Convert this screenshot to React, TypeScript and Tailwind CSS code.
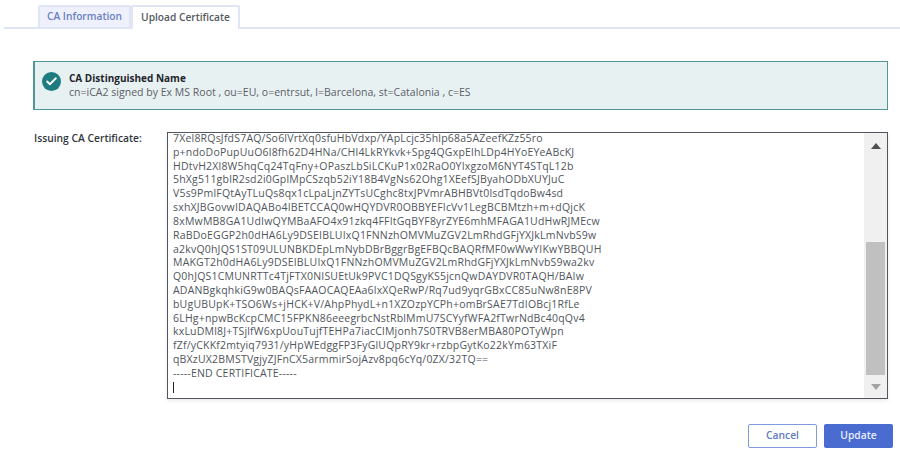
import { Check } from "lucide-react";

const certLines = [
  "7Xel8RQsJfdS7AQ/So6lVrtXq0sfuHbVdxp/YApLcjc35hlp68a5AZeefKZz55ro",
  "p+ndoDoPupUuO6l8fh62D4HNa/CHl4LkRYkvk+Spg4QGxpElhLDp4HYoEYeABcKJ",
  "HDtvH2Xl8W5hqCq24TqFny+OPaszLbSiLCKuP1x02RaO0YIxgzoM6NYT4STqL12b",
  "5hXg511gblR2sd2i0GplMpCSzqb52iY18B4VgNs62Ohg1XEefSJByahODbXUYJuC",
  "V5s9PmlFQtAyTLuQs8qx1cLpaLjnZYTsUCghc8txJPVmrABHBVt0lsdTqdoBw4sd",
  "sxhXJBGovwIDAQABo4IBETCCAQ0wHQYDVR0OBBYEFIcVv1LegBCBMtzh+m+dQjcK",
  "8xMwMB8GA1UdIwQYMBaAFO4x91zkq4FFItGqBYF8yrZYE6mhMFAGA1UdHwRJMEcw",
  "RaBDoEGGP2h0dHA6Ly9DSEIBLUIxQ1FNNzhOMVMuZGV2LmRhdGFjYXJkLmNvbS9w",
  "a2kvQ0hJQS1ST09ULUNBKDEpLmNybDBrBggrBgEFBQcBAQRfMF0wWwYIKwYBBQUH",
  "MAKGT2h0dHA6Ly9DSEIBLUIxQ1FNNzhOMVMuZGV2LmRhdGFjYXJkLmNvbS9wa2kv",
  "Q0hJQS1CMUNRTTc4TjFTX0NISUEtUk9PVC1DQSgyKS5jcnQwDAYDVR0TAQH/BAIw",
  "ADANBgkqhkiG9w0BAQsFAAOCAQEAa6lxXQeRwP/Rq7ud9yqrGBxCC85uNw8nE8PV",
  "bUgUBUpK+TSO6Ws+jHCK+V/AhpPhydL+n1XZOzpYCPh+omBrSAE7TdIOBcj1RfLe",
  "6LHg+npwBcKcpCMC15FPKN86eeegrbcNstRblMmU7SCYyfWFA2fTwrNdBc40qQv4",
  "kxLuDMl8J+TSjlfW6xpUouTujfTEHPa7iacClMjonh7S0TRVB8erMBA80POTyWpn",
  "fZf/yCKKf2mtyiq7931/yHpWEdggFP3FyGlUQpRY9kr+rzbpGytKo22kYm63TXiF",
  "qBXzUX2BMSTVgjyZJFnCX5armmirSojAzv8pq6cYq/0ZX/32TQ==",
  "-----END CERTIFICATE-----",
];

export default function App() {
  return (
    <div className="w-[900px] h-[456px] bg-white overflow-hidden font-['Open_Sans','Liberation_Sans',sans-serif] text-[#4a4f57]">
      <div className="ml-1 mt-[5px] h-6 flex pl-[34px] border-b-2 border-[#dfe5f5]">
        <div className="w-[93px] h-6 flex items-center justify-center bg-[#eef1fb] border-2 border-[#dfe5f5] rounded-t-[2px] text-[10.2px] font-semibold text-[#6b80c0]">
          CA Information
        </div>
        <div className="w-[109px] h-6 flex items-center justify-center bg-white border-2 border-b-0 border-[#dfe5f5] rounded-t-[2px] text-[10.2px] font-semibold text-[#555a60]">
          Upload Certificate
        </div>
      </div>

      <div className="ml-[33px] mt-8 w-[855px] h-[49px] flex items-start gap-2 pl-[7px] pt-[10px] bg-[#e8f1f2] border border-[#4f9799] border-l-2">
        <div className="w-[19px] h-[19px] rounded-full bg-[#1c7c80] flex items-center justify-center shrink-0">
          <Check size={13} strokeWidth={3.5} className="text-white" />
        </div>
        <div className="flex flex-col -mt-[1px]">
          <div className="text-[10px] leading-[14px] font-bold text-[#22252b]">CA Distinguished Name</div>
          <div className="text-[10.5px] leading-[14px] tracking-[0.02px] text-[#5b6067]">
            cn=iCA2 signed by Ex MS Root , ou=EU, o=entrsut, l=Barcelona, st=Catalonia , c=ES
          </div>
        </div>
      </div>

      <div className="ml-[34px] mt-[22px] flex">
        <div className="w-[133px] text-[10.3px] leading-[13px] font-semibold text-[#33373d]">
          Issuing CA Certificate:
        </div>
        <div className="w-[721px] h-[267px] flex border border-[#50555f] shadow-[0_2px_4px_rgba(0,0,0,0.08)]">
          <div className="flex-1 overflow-hidden pl-[5px] -mt-[1px] text-[10.5px] leading-[13.82px] tracking-[0.2px] whitespace-pre text-[#50555c]">
            {certLines.map((line) => (
              <div key={line}>{line}</div>
            ))}
            <div className="w-px h-[11px] bg-[#222] mt-[1px]" />
          </div>
          <div className="w-[23px] flex flex-col items-center bg-[#f0f0f0]">
            <div className="h-[23px] mt-[1px] flex items-center justify-center">
              <div className="w-0 h-0 border-x-[5px] border-x-transparent border-b-[6px] border-b-[#505050]" />
            </div>
            <div className="flex-1" />
            <div className="w-[19px] h-[133px] bg-[#c0c0c0]" />
            <div className="h-[23px] flex items-center justify-center">
              <div className="w-0 h-0 border-x-[5px] border-x-transparent border-t-[6px] border-t-[#a3a3a3]" />
            </div>
          </div>
        </div>
      </div>

      <div className="mt-[25px] ml-[748px] flex gap-[7px]">
        <button className="w-[69px] h-6 bg-white border border-[#7f9be0] rounded-[2px] text-[10.3px] font-semibold text-[#6279c4]">
          Cancel
        </button>
        <button className="w-[69px] h-6 bg-[#4a6cd0] rounded-[2px] text-[10.3px] font-semibold text-[#e8edfb]">
          Update
        </button>
      </div>
    </div>
  );
}
